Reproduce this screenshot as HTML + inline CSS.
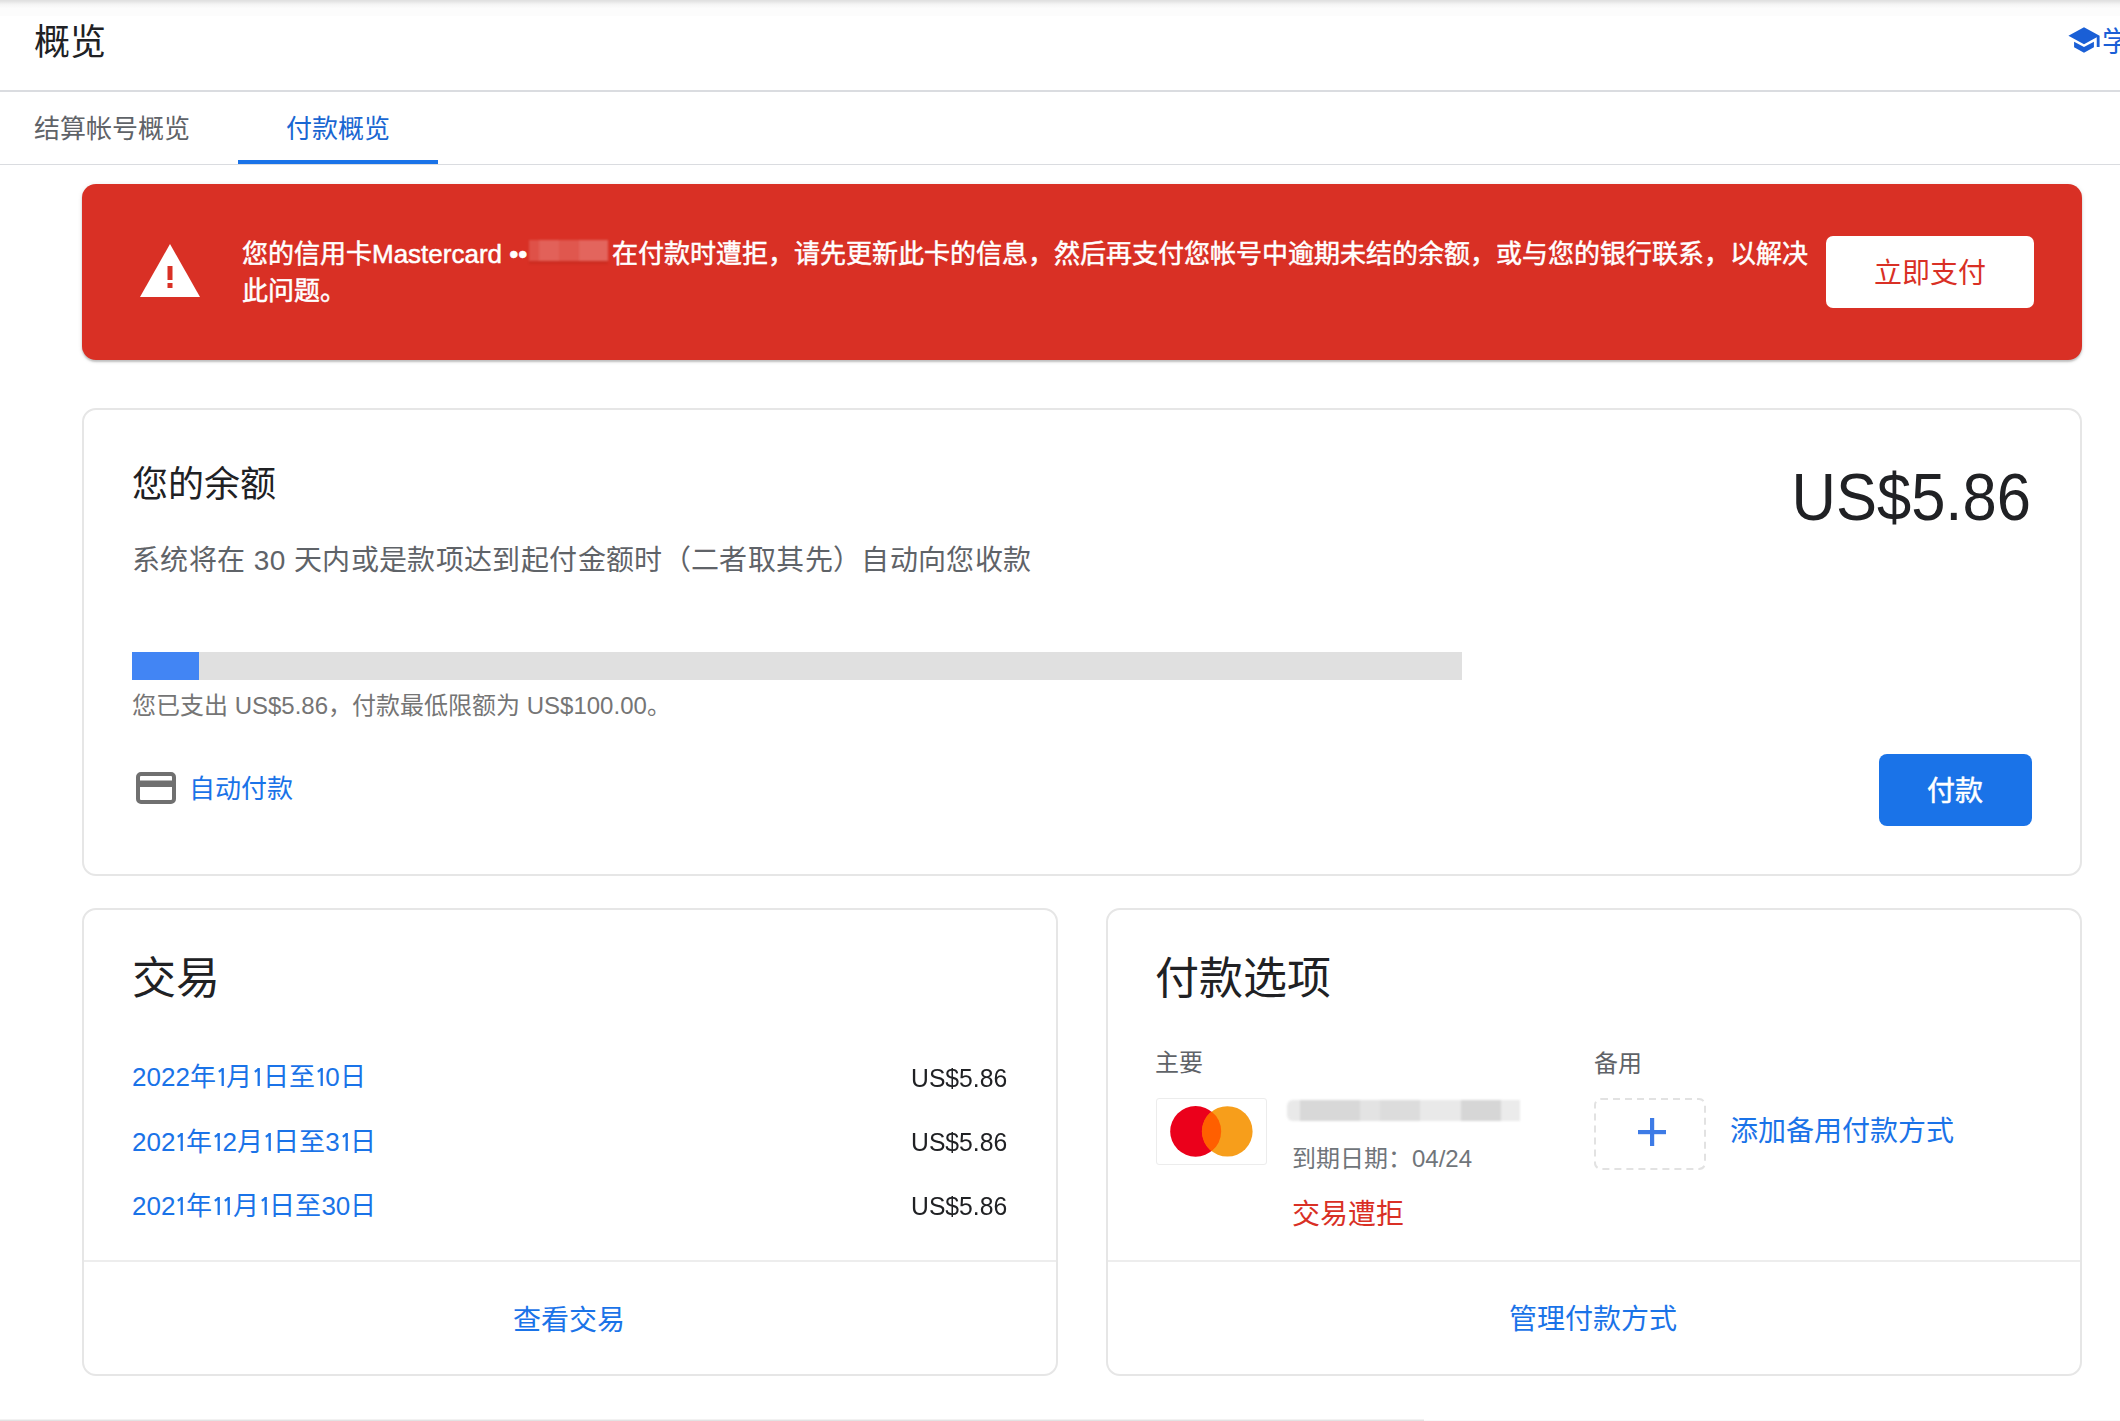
<!DOCTYPE html>
<html lang="zh-CN"><head><meta charset="utf-8">
<style>
html,body{margin:0;padding:0;}
body{width:2120px;height:1421px;overflow:hidden;background:#fff;position:relative;font-family:"Liberation Sans",sans-serif;color:#202124;}
.a{position:absolute;white-space:nowrap;line-height:1;}
#topshadow{position:absolute;left:0;top:0;width:2120px;height:16px;background:linear-gradient(#e0e0e0 0px,#e2e2e2 1px,#f3f3f3 4px,#f8f8f8 6px,#fcfcfc 8.5px,#fcfcfc 15.5px,#fff 16px);}
#hdrline{position:absolute;left:0;top:90px;width:2120px;height:2px;background:#dadce0;}
#tabline{position:absolute;left:0;top:164px;width:2120px;height:1px;background:#dadce0;}
#tabul{position:absolute;left:238px;top:160px;width:200px;height:4px;background:#1a73e8;}
.card{position:absolute;box-sizing:border-box;border:2px solid #e6e6e6;border-radius:14px;background:#fff;}
#banner{position:absolute;left:82px;top:184px;width:2000px;height:176px;background:#d93025;border-radius:14px;box-shadow:0 2px 2px rgba(0,0,0,.2),0 1px 5px rgba(0,0,0,.1);}
.btnw{position:absolute;background:#fff;border-radius:7px;}
.blue{color:#1a73e8;}
.grey{color:#5f6368;}
.n1{display:inline-block;vertical-align:baseline;}
</style></head>
<body>
<div id="topshadow"></div>
<div class="a" style="left:34px;top:25px;font-size:36px;color:#202124;">概览</div>
<svg class="a" style="left:2067px;top:23px" width="34" height="34" viewBox="0 0 24 24"><path fill="#1a5fd6" d="M5 13.18v4L12 21l7-3.82v-4L12 17l-7-3.82zM12 3L1 9l11 6 9-4.91V17h2V9L12 3z"/></svg>
<div class="a" style="left:2102px;top:29px;font-size:28px;color:#1a5fd6;">学</div>
<div id="hdrline"></div>

<div class="a grey" style="left:34px;top:116px;font-size:26px;">结算帐号概览</div>
<div class="a" style="left:286px;top:116px;font-size:26px;color:#1a67d2;">付款概览</div>
<div id="tabline"></div>
<div id="tabul"></div>

<div id="banner"></div>
<svg class="a" style="left:140px;top:244px" width="60" height="53" viewBox="0 0 60 53">
  <path d="M30 0 L60 53 L0 53 Z" fill="#fff"/>
  <rect x="27.5" y="22" width="5" height="14" fill="#d93025"/>
  <rect x="27.5" y="39" width="5" height="5" fill="#d93025"/>
</svg>
<div class="a" style="left:242px;top:236px;font-size:26px;line-height:36.7px;color:#fff;font-weight:500;-webkit-text-stroke:0.5px #fff;">您的信用卡Mastercard ••<span style="display:inline-block;width:85px;height:26px;vertical-align:middle;"></span>在付款时遭拒，请先更新此卡的信息，然后再支付您帐号中逾期未结的余额，或与您的银行联系，以解决<br>此问题。</div>
<div class="a" style="left:529px;top:240px;width:79px;height:21px;filter:blur(0.8px);">
<div class="a" style="left:0;top:0;width:10px;height:21px;background:rgba(255,255,255,.16);"></div>
<div class="a" style="left:10px;top:0;width:20px;height:21px;background:rgba(255,255,255,.24);"></div>
<div class="a" style="left:30px;top:0;width:20px;height:21px;background:rgba(255,255,255,.19);"></div>
<div class="a" style="left:50px;top:0;width:29px;height:21px;background:rgba(255,255,255,.26);"></div>
<div class="a" style="left:0;top:21px;width:79px;height:3px;background:rgba(150,20,10,.18);"></div>
</div>
<div class="btnw" style="left:1826px;top:236px;width:208px;height:72px;"></div>
<div class="a" style="left:1874px;top:260px;font-size:28px;color:#d93025;">立即支付</div>

<!-- balance card -->
<div class="card" style="left:82px;top:408px;width:2000px;height:468px;"></div>
<div class="a" style="left:132px;top:467px;font-size:36px;color:#202124;">您的余额</div>
<div class="a grey" style="left:132px;top:547px;font-size:28px;letter-spacing:0.38px;">系统将在 30 天内或是款项达到起付金额时（二者取其先）自动向您收款</div>
<div class="a" style="right:89px;top:464px;font-size:66px;color:#202124;transform:scaleX(0.932);transform-origin:right;">US$5.86</div>
<div class="a" style="left:132px;top:652px;width:1330px;height:28px;background:#e0e0e0;"></div>
<div class="a" style="left:132px;top:652px;width:67px;height:28px;background:#4285f4;"></div>
<div class="a" style="left:132px;top:694px;font-size:24px;color:#757575;">您已支出 US$5.86，付款最低限额为 US$100.00。</div>
<svg class="a" style="left:136px;top:772px" width="40" height="32" viewBox="0 0 40 32">
  <rect x="2" y="2" width="36" height="28" rx="3" fill="none" stroke="#707070" stroke-width="4"/>
  <rect x="2" y="8.5" width="36" height="6.5" fill="#707070"/>
</svg>
<div class="a blue" style="left:189px;top:776px;font-size:26px;">自动付款</div>
<div class="a" style="left:1879px;top:754px;width:153px;height:72px;background:#1a73e8;border-radius:8px;"></div>
<div class="a" style="left:1927px;top:778px;font-size:28px;color:#fff;-webkit-text-stroke:0.5px #fff;">付款</div>

<!-- transactions card -->
<div class="card" style="left:82px;top:908px;width:976px;height:468px;"></div>
<div class="a" style="left:84px;top:1260px;width:972px;height:2px;background:#ededed;"></div>
<div class="a" style="left:132px;top:957px;font-size:44px;color:#202124;">交易</div>
<div class="a blue" style="left:132px;top:1064px;font-size:26px;">2022年<svg class="n1" width="10.5" height="18.5" viewBox="0 0 10 18.5" preserveAspectRatio="xMidYMid meet"><rect x="5.3" y="0" width="2.3" height="18.5" fill="#1a73e8"/><path d="M6.6 0.9 L2.6 3.9" stroke="#1a73e8" stroke-width="2.2" fill="none"/></svg>月<svg class="n1" width="10.5" height="18.5" viewBox="0 0 10 18.5" preserveAspectRatio="xMidYMid meet"><rect x="5.3" y="0" width="2.3" height="18.5" fill="#1a73e8"/><path d="M6.6 0.9 L2.6 3.9" stroke="#1a73e8" stroke-width="2.2" fill="none"/></svg>日至<svg class="n1" width="10.5" height="18.5" viewBox="0 0 10 18.5" preserveAspectRatio="xMidYMid meet"><rect x="5.3" y="0" width="2.3" height="18.5" fill="#1a73e8"/><path d="M6.6 0.9 L2.6 3.9" stroke="#1a73e8" stroke-width="2.2" fill="none"/></svg>0日</div>
<div class="a blue" style="left:132px;top:1129px;font-size:26px;">202<svg class="n1" width="10.5" height="18.5" viewBox="0 0 10 18.5" preserveAspectRatio="xMidYMid meet"><rect x="5.3" y="0" width="2.3" height="18.5" fill="#1a73e8"/><path d="M6.6 0.9 L2.6 3.9" stroke="#1a73e8" stroke-width="2.2" fill="none"/></svg>年<svg class="n1" width="10.5" height="18.5" viewBox="0 0 10 18.5" preserveAspectRatio="xMidYMid meet"><rect x="5.3" y="0" width="2.3" height="18.5" fill="#1a73e8"/><path d="M6.6 0.9 L2.6 3.9" stroke="#1a73e8" stroke-width="2.2" fill="none"/></svg>2月<svg class="n1" width="10.5" height="18.5" viewBox="0 0 10 18.5" preserveAspectRatio="xMidYMid meet"><rect x="5.3" y="0" width="2.3" height="18.5" fill="#1a73e8"/><path d="M6.6 0.9 L2.6 3.9" stroke="#1a73e8" stroke-width="2.2" fill="none"/></svg>日至3<svg class="n1" width="10.5" height="18.5" viewBox="0 0 10 18.5" preserveAspectRatio="xMidYMid meet"><rect x="5.3" y="0" width="2.3" height="18.5" fill="#1a73e8"/><path d="M6.6 0.9 L2.6 3.9" stroke="#1a73e8" stroke-width="2.2" fill="none"/></svg>日</div>
<div class="a blue" style="left:132px;top:1193px;font-size:26px;">202<svg class="n1" width="10.5" height="18.5" viewBox="0 0 10 18.5" preserveAspectRatio="xMidYMid meet"><rect x="5.3" y="0" width="2.3" height="18.5" fill="#1a73e8"/><path d="M6.6 0.9 L2.6 3.9" stroke="#1a73e8" stroke-width="2.2" fill="none"/></svg>年<svg class="n1" width="10.5" height="18.5" viewBox="0 0 10 18.5" preserveAspectRatio="xMidYMid meet"><rect x="5.3" y="0" width="2.3" height="18.5" fill="#1a73e8"/><path d="M6.6 0.9 L2.6 3.9" stroke="#1a73e8" stroke-width="2.2" fill="none"/></svg><svg class="n1" width="10.5" height="18.5" viewBox="0 0 10 18.5" preserveAspectRatio="xMidYMid meet"><rect x="5.3" y="0" width="2.3" height="18.5" fill="#1a73e8"/><path d="M6.6 0.9 L2.6 3.9" stroke="#1a73e8" stroke-width="2.2" fill="none"/></svg>月<svg class="n1" width="10.5" height="18.5" viewBox="0 0 10 18.5" preserveAspectRatio="xMidYMid meet"><rect x="5.3" y="0" width="2.3" height="18.5" fill="#1a73e8"/><path d="M6.6 0.9 L2.6 3.9" stroke="#1a73e8" stroke-width="2.2" fill="none"/></svg>日至30日</div>
<div class="a" style="right:1113px;top:1065px;font-size:26px;color:#202124;transform:scaleX(0.95);transform-origin:right;">US$5.86</div>
<div class="a" style="right:1113px;top:1129px;font-size:26px;color:#202124;transform:scaleX(0.95);transform-origin:right;">US$5.86</div>
<div class="a" style="right:1113px;top:1193px;font-size:26px;color:#202124;transform:scaleX(0.95);transform-origin:right;">US$5.86</div>
<div class="a blue" style="left:513px;top:1307px;font-size:28px;">查看交易</div>

<!-- payment options card -->
<div class="card" style="left:1106px;top:908px;width:976px;height:468px;"></div>
<div class="a" style="left:1108px;top:1260px;width:972px;height:2px;background:#ededed;"></div>
<div class="a" style="left:1155px;top:957px;font-size:44px;color:#202124;">付款选项</div>
<div class="a grey" style="left:1155px;top:1051px;font-size:24px;">主要</div>
<div class="a grey" style="left:1594px;top:1052px;font-size:24px;">备用</div>
<div class="a" style="left:1156px;top:1098px;width:111px;height:67px;box-sizing:border-box;border:1.5px solid #ececec;border-radius:3px;"></div>
<svg class="a" style="left:1156px;top:1098px" width="111" height="67" viewBox="0 0 111 67">
  <circle cx="39.6" cy="33.4" r="25.4" fill="#eb001b"/>
  <circle cx="71.4" cy="33.4" r="25.2" fill="#f79e1b"/>
  <path d="M55.5 13.5 A25.3 25.3 0 0 1 55.5 53.3 A25.3 25.3 0 0 1 55.5 13.5 Z" fill="#ff5f00"/>
</svg>
<div class="a" style="left:1287px;top:1100px;width:233px;height:21px;filter:blur(1.2px);">
<div class="a" style="left:0;top:0;width:13px;height:21px;background:#e9e9e9;border-radius:6px 0 0 6px;"></div>
<div class="a" style="left:13px;top:0;width:60px;height:21px;background:#d8d8d8;"></div>
<div class="a" style="left:73px;top:0;width:20px;height:21px;background:#e3e3e3;"></div>
<div class="a" style="left:93px;top:0;width:40px;height:21px;background:#dcdcdc;"></div>
<div class="a" style="left:133px;top:0;width:41px;height:21px;background:#e9e9e9;"></div>
<div class="a" style="left:174px;top:0;width:40px;height:21px;background:#d6d6d6;"></div>
<div class="a" style="left:214px;top:0;width:19px;height:21px;background:#ebebeb;"></div>
</div>
<div class="a" style="left:1292px;top:1147px;font-size:24px;color:#70757a;">到期日期：04/24</div>
<div class="a" style="left:1292px;top:1201px;font-size:28px;color:#d93025;">交易遭拒</div>
<svg class="a" style="left:1594px;top:1098px" width="112" height="72" viewBox="0 0 112 72">
  <rect x="1" y="1" width="110" height="70" rx="6" fill="none" stroke="#e2e2e2" stroke-width="2" stroke-dasharray="7 5"/>
</svg>
<svg class="a" style="left:1638px;top:1118px" width="28" height="28" viewBox="0 0 28 28">
  <rect x="12" y="0" width="4.2" height="28" fill="#3d7be6"/>
  <rect x="0" y="12" width="28" height="4.2" fill="#3d7be6"/>
</svg>
<div class="a blue" style="left:1730px;top:1118px;font-size:28px;">添加备用付款方式</div>
<div class="a blue" style="left:1509px;top:1306px;font-size:28px;">管理付款方式</div>

<div class="a" style="left:0;top:1419px;width:1424px;height:1px;background:#f2f2f2;"></div>
<div class="a" style="left:0;top:1420px;width:1424px;height:1px;background:#e2e2e2;"></div>
<div class="a" style="left:1424px;top:1420px;width:696px;height:1px;background:#f8f8f8;"></div>
</body></html>
